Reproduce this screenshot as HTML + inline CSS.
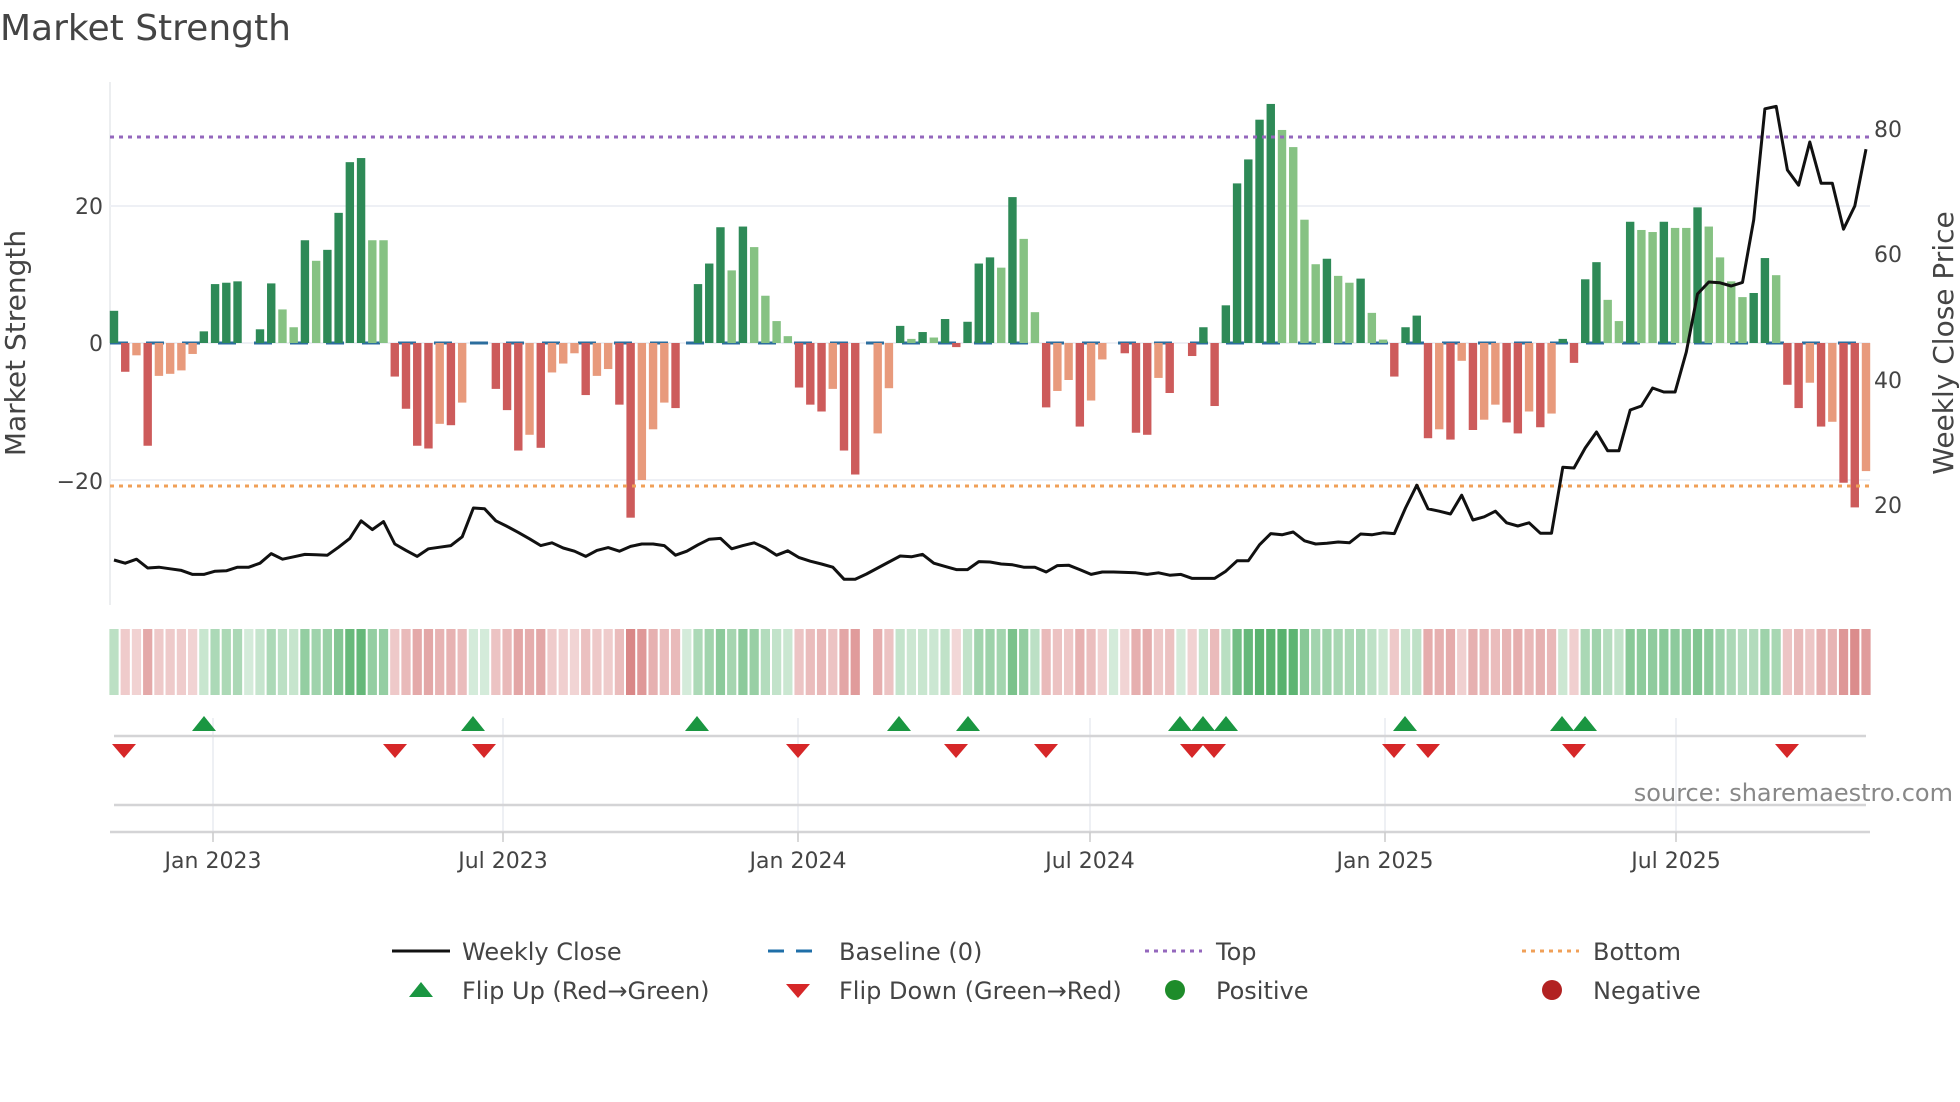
<!DOCTYPE html>
<html><head><meta charset="utf-8"><style>
html,body{margin:0;padding:0;background:#fff;width:1960px;height:1102px;overflow:hidden}
svg{display:block}
text{font-family:"DejaVu Sans","Liberation Sans",sans-serif;fill:#444}
</style></head><body>
<svg id="s" width="1960" height="1102" xmlns="http://www.w3.org/2000/svg">
<text x="0" y="40" font-size="36" fill="#333">Market Strength</text>
<g id="grid"></g>
<g id="bars"></g>
<g id="heat"></g>
<g id="price"></g>
<g id="marks"></g>
<text x="103" y="214" font-size="22" text-anchor="end">20</text>
<text x="103" y="351" font-size="22" text-anchor="end">0</text>
<text x="103" y="489" font-size="22" text-anchor="end">−20</text>
<text x="1874" y="137" font-size="22">80</text>
<text x="1874" y="262" font-size="22">60</text>
<text x="1874" y="388" font-size="22">40</text>
<text x="1874" y="513" font-size="22">20</text>
<text transform="translate(25,343) rotate(-90)" font-size="28" text-anchor="middle">Market Strength</text>
<text transform="translate(1953,343) rotate(-90)" font-size="28" text-anchor="middle">Weekly Close Price</text>
<text x="213" y="868" font-size="22" text-anchor="middle">Jan 2023</text>
<text x="503" y="868" font-size="22" text-anchor="middle">Jul 2023</text>
<text x="798" y="868" font-size="22" text-anchor="middle">Jan 2024</text>
<text x="1090" y="868" font-size="22" text-anchor="middle">Jul 2024</text>
<text x="1385" y="868" font-size="22" text-anchor="middle">Jan 2025</text>
<text x="1676" y="868" font-size="22" text-anchor="middle">Jul 2025</text>
<text x="1953" y="801" font-size="24" text-anchor="end" style="fill:#888">source: sharemaestro.com</text>
<!-- legend -->
<line x1="392" y1="951" x2="450" y2="951" stroke="#111" stroke-width="3"/>
<text x="462" y="960" font-size="24">Weekly Close</text>
<line x1="768" y1="951" x2="824" y2="951" stroke="#1f6fa8" stroke-width="3" stroke-dasharray="16,12"/>
<text x="839" y="960" font-size="24">Baseline (0)</text>
<line x1="1145" y1="951" x2="1202" y2="951" stroke="#9467bd" stroke-width="3" stroke-dasharray="4,5"/>
<text x="1216" y="960" font-size="24">Top</text>
<line x1="1522" y1="951" x2="1579" y2="951" stroke="#f0a058" stroke-width="3" stroke-dasharray="4,5"/>
<text x="1593" y="960" font-size="24">Bottom</text>
<polygon points="409,997 433,997 421,982" fill="#1a9641"/>
<text x="462" y="999" font-size="24">Flip Up (Red→Green)</text>
<polygon points="786,984 810,984 798,998" fill="#d62728"/>
<text x="839" y="999" font-size="24">Flip Down (Green→Red)</text>
<circle cx="1175" cy="990" r="10" fill="#1e8c2a"/>
<text x="1216" y="999" font-size="24">Positive</text>
<circle cx="1552" cy="990" r="10" fill="#b22222"/>
<text x="1593" y="999" font-size="24">Negative</text>
</svg>
<script>
var NS="http://www.w3.org/2000/svg";
function el(p,t,a){var e=document.createElementNS(NS,t);for(var k in a)e.setAttribute(k,a[k]);document.getElementById(p).appendChild(e);return e;}
var V=[4.7,-4.2,-1.8,-15,-4.8,-4.5,-4,-1.6,1.7,8.6,8.8,9,0,2,8.7,4.9,2.3,15,12,13.6,19,26.4,27,15,15,-4.9,-9.6,-15,-15.4,-11.8,-12,-8.7,0,0,-6.7,-9.8,-15.7,-13.4,-15.3,-4.3,-3,-1.5,-7.6,-4.8,-3.8,-9,-25.5,-20,-12.6,-8.7,-9.5,0,8.6,11.6,16.9,10.6,17,14,6.9,3.2,1,-6.5,-9,-10,-6.7,-15.7,-19.2,0,-13.2,-6.6,2.5,0.6,1.6,0.8,3.5,-0.6,3.1,11.6,12.5,11,21.3,15.2,4.5,-9.4,-7,-5.4,-12.2,-8.4,-2.4,0,-1.5,-13.1,-13.4,-5.1,-7.3,0,-1.9,2.3,-9.2,5.5,23.3,26.8,32.6,34.9,31.1,28.6,18,11.5,12.3,9.8,8.8,9.4,4.4,0.5,-4.9,2.3,4,-13.9,-12.6,-14.1,-2.6,-12.7,-11.2,-9,-11.6,-13.2,-10,-12.3,-10.3,0.6,-2.9,9.3,11.8,6.3,3.2,17.7,16.5,16.2,17.7,16.8,16.8,19.8,17,12.5,9,6.7,7.3,12.4,9.9,-6.1,-9.5,-5.8,-12.2,-11.5,-20.4,-24,-18.7];
var T="DRSRSSSSDD"+"DD_DDLLDLD"+"DDDLLRRRRS"+"RS__RRRSRS"+"SSRSSRRSSS"+"R_DDDLDLLL"+"LRRRSRR_SS"+"DLDLDRDDDL"+"DLLRSSRSS_"+"RRRSR_RDRD"+"DDDDLLLLDL"+"LDLLRDDRSR"+"SRSSRRSRSD"+"RDDLLDLLDL"+"LDLLLLDDLR"+"RSRSRRS";
var C={D:"#2e8a57",L:"#86c283",R:"#cd5b5b",S:"#e89a7c"};
var N=157,x0=114,P=(1866-114)/156,Z=343,U=6.85;
el("grid","line",{x1:110,y1:82,x2:110,y2:605,stroke:"#e6e8ec","stroke-width":1.5});
[206,343,480].forEach(function(y){el("grid","line",{x1:110,y1:y,x2:1870,y2:y,stroke:"#eef0f5","stroke-width":2});});
[213,503,798,1090,1385,1676].forEach(function(x){el("grid","line",{x1:x,y1:718,x2:x,y2:840,stroke:"#e8eaf0","stroke-width":1.5});});
el("grid","line",{x1:114,y1:736,x2:1866,y2:736,stroke:"#d4d4d6","stroke-width":2.5});
el("grid","line",{x1:114,y1:805,x2:1866,y2:805,stroke:"#d4d4d6","stroke-width":2.5});
el("grid","line",{x1:110,y1:832,x2:1870,y2:832,stroke:"#d4d4d6","stroke-width":2.5});
[213,503,798,1090,1385,1676].forEach(function(x){el("grid","line",{x1:x,y1:832,x2:x,y2:842,stroke:"#ccc","stroke-width":1.5});});
el("bars","line",{x1:110,y1:Z,x2:1870,y2:Z,stroke:"#2c6e9e","stroke-width":3,"stroke-dasharray":"18,18"});
for(var i=0;i<N;i++){var v=V[i],x=x0+i*P,c=T[i];
 if(i!=67){var a=Math.min(Math.abs(v)/30,1);var col=v>0?"rgba(60,165,85,"+(0.25+0.6*a)+")":(v<0?"rgba(200,80,80,"+(0.22+0.55*a)+")":"rgba(60,165,85,0.22)");
 el("heat","rect",{x:x-P/2+1,y:629,width:P-2,height:66,fill:col});}
 if(!v||!C[c])continue;
 var h=Math.abs(v)*U;el("bars","rect",{x:x-4.2,y:v>0?Z-h:Z,width:8.4,height:h,fill:C[c]});}
el("bars","line",{x1:110,y1:137,x2:1870,y2:137,stroke:"#9467bd","stroke-width":3,"stroke-dasharray":"4,5"});
el("bars","line",{x1:110,y1:486,x2:1870,y2:486,stroke:"#f0a058","stroke-width":3,"stroke-dasharray":"4,5"});
var Y=[1400,1408,1398,1420,1418,1422,1426,1436,1436,1428,1427,1418,1418,1408,1384,1398,1392,1386,1387,1388,1368,1346,1302,1324,1304,1360,1376,1391,1372,1368,1364,1342,1270,1272,1302,1316,1331,1347,1364,1357,1370,1378,1391,1376,1369,1378,1366,1360,1360,1364,1388,1378,1362,1348,1346,1372,1364,1357,1370,1388,1377,1394,1403,1410,1418,1448,1448,1435,1420,1405,1390,1392,1386,1408,1416,1424,1424,1404,1405,
1410,1412,1418,1418,1430,1414,1413,1424,1436,1430,1430,1431,1432,1436,1432,1438,1436,1446,1446,1446,1428,1402,1402,1362,1334,1337,1330,1352,1360,1358,1355,1357,1335,1337,1332,1334,1270,1213,1272,1278,1285,1238,1300,1292,1278,1307,1315,1307,1333,1333,1168,1170,1120,1080,1127,1127,1025,1015,970,980,980,880,735,705,707,715,706,550,272,266,425,463,355,458,458,573,515,373];
var d="";for(var i=0;i<Y.length&&i<N;i++){d+=(i?"L":"M")+(x0+i*P).toFixed(1)+","+(Y[i]/2.5).toFixed(1);}
el("price","path",{d:d,fill:"none",stroke:"#111","stroke-width":3,"stroke-linejoin":"round"});
[204,473,697,899,968,1180,1203,1226,1405,1562,1585].forEach(function(x){el("marks","polygon",{points:(x-12)+",731 "+(x+12)+",731 "+x+",716",fill:"#1a9641"});});
[124,395,484,798,956,1046,1192,1214,1394,1428,1574,1787].forEach(function(x){el("marks","polygon",{points:(x-12)+",744 "+(x+12)+",744 "+x+",758",fill:"#d62728"});});
</script>
</body></html>
